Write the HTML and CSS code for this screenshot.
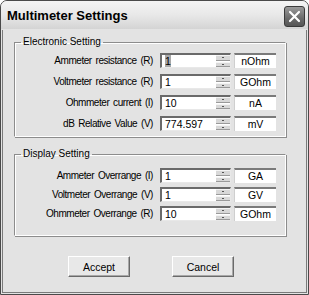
FILE: index.html
```html
<!DOCTYPE html>
<html lang="en">

<head>
    <meta charset="UTF-8">
    <title>Multimeter Settings</title>
    <link rel="stylesheet" href="styles.css">
</head>

<body>

    <div class="window">
        <div class="titlebar">
            <span class="title">Multimeter Settings</span>
            <div class="close">
                <svg width="13" height="13" viewBox="0 0 13 13">
                    <path d="M2 2 L11 11 M11 2 L2 11" stroke="#fff" stroke-width="2.2" stroke-linecap="round" />
                </svg>
            </div>
        </div>

        <div class="client">
            <fieldset class="group first">
                <legend>Electronic Setting</legend>
                <div class="row">
                    <span class="label">Ammeter resistance (R)</span>
                    <div class="field"><span class="text"><span class="sel">1</span></span><span class="spin"><i></i><i></i></span></div>
                    <span class="unit">nOhm</span>
                </div>
                <div class="row">
                    <span class="label">Voltmeter resistance (R)</span>
                    <div class="field"><span class="text">1</span><span class="spin"><i></i><i></i></span></div>
                    <span class="unit">GOhm</span>
                </div>
                <div class="row">
                    <span class="label">Ohmmeter current (I)</span>
                    <div class="field"><span class="text">10</span><span class="spin"><i></i><i></i></span></div>
                    <span class="unit">nA</span>
                </div>
                <div class="row">
                    <span class="label">dB Relative Value (V)</span>
                    <div class="field"><span class="text">774.597</span><span class="spin"><i></i><i></i></span></div>
                    <span class="unit">mV</span>
                </div>
            </fieldset>

            <fieldset class="group second">
                <legend>Display Setting</legend>
                <div class="row">
                    <span class="label">Ammeter Overrange (I)</span>
                    <div class="field"><span class="text">1</span><span class="spin"><i></i><i></i></span></div>
                    <span class="unit">GA</span>
                </div>
                <div class="row">
                    <span class="label">Voltmeter Overrange (V)</span>
                    <div class="field"><span class="text">1</span><span class="spin"><i></i><i></i></span></div>
                    <span class="unit">GV</span>
                </div>
                <div class="row">
                    <span class="label">Ohmmeter Overrange (R)</span>
                    <div class="field"><span class="text">10</span><span class="spin"><i></i><i></i></span></div>
                    <span class="unit">GOhm</span>
                </div>
            </fieldset>

            <div class="buttons">
                <button class="btn">Accept</button>
                <button class="btn">Cancel</button>
            </div>
        </div>
    </div>

</body>

</html>
```

FILE: styles.css
```css
body {
    margin: 0;
    padding: 0;
    font-family: "Liberation Sans", Arial, sans-serif;
    font-size: 10px;
    color: #000;
}

.window {
    width: 309px;
    height: 295px;
    box-sizing: border-box;
    border: 1px solid #4a4a4a;
    border-radius: 7px 7px 0 0;
    background-color: #e3e3e3;
    display: flex;
    flex-direction: column;
    overflow: hidden;
}

.titlebar {
    height: 28px;
    display: flex;
    align-items: center;
    justify-content: space-between;
    padding: 0 3px 0 6px;
    background: linear-gradient(#f4f4f4, #e8e8e8 50%, #d4d4d4);
}

.title {
    font-weight: bold;
    font-size: 13px;
    margin-top: 1px;
}

.close {
    width: 19px;
    height: 19px;
    display: flex;
    align-items: center;
    justify-content: center;
    border: 1px solid #3a3a3a;
    border-radius: 3px;
    background: linear-gradient(#9a9a9a, #6a6a6a 60%, #555);
    margin-top: 3px;
}

.client {
    flex: 1;
    margin: 1px;
    border: 1px solid #7a7a7a;
    border-top: none;
    padding-top: 6px;
}

.group {
    margin: 0 20px 0 11px;
    padding: 0;
    border: none;
    border-top: 1px solid #8c8c8c;
    border-left: 1px solid #8c8c8c;
    border-right: 1px solid #fff;
    border-bottom: 1px solid #fff;
    box-shadow: inset 1px 1px 0 #fff, 1px 1px 0 #8c8c8c;
    display: flex;
    flex-direction: column;
}

.group legend {
    margin-left: 6px;
    padding: 0 2px;
    line-height: 12px;
    font-size: 10px;
}

.first {
    gap: 6px;
    padding: 5px 0 5px 0;
}

.second {
    margin-top: 11px;
    gap: 4px;
    padding: 8px 0 14px 0;
}

.row {
    display: flex;
    align-items: center;
    height: 15px;
}

.label {
    width: 138px;
    text-align: right;
    font-size: 10px;
    letter-spacing: -0.45px;
    word-spacing: 1.5px;
    white-space: nowrap;
}

.field {
    margin-left: 7px;
    width: 71px;
    height: 15px;
    box-sizing: border-box;
    display: flex;
    align-items: center;
    background-color: #fff;
    border-top: 2px solid #6a6a6a;
    border-left: 2px solid #6a6a6a;
    border-right: 1px solid #e8e8e8;
    border-bottom: 1px solid #e8e8e8;
}

.text {
    flex: 1;
    padding-left: 3px;
    font-size: 10.5px;
    line-height: 12px;
}

.sel {
    background-color: #a8a8a8;
}

.spin {
    width: 14px;
    height: 12px;
    display: flex;
    flex-direction: column;
    gap: 1px;
}

.spin i {
    flex: 1;
    background-color: #d8d8d8;
    border-top: 1px solid #f4f4f4;
    border-bottom: 1px solid #9a9a9a;
    display: flex;
    align-items: center;
    justify-content: center;
}

.spin i::after {
    content: "";
    width: 2px;
    height: 1px;
    background-color: #555;
}

.unit {
    margin-left: 3px;
    width: 42px;
    height: 15px;
    box-sizing: border-box;
    background-color: #fff;
    border-top: 2px solid #7a7a7a;
    border-left: 1px solid #cfcfcf;
    text-align: center;
    font-size: 10.5px;
    line-height: 12px;
}

.buttons {
    display: flex;
    gap: 42px;
    padding-left: 65px;
    margin-top: 20px;
}

.btn {
    width: 62px;
    height: 21px;
    padding: 0;
    font-family: "Liberation Sans", Arial, sans-serif;
    font-size: 10.5px;
    background-color: #e8e8e8;
    border: 1px solid;
    border-color: #fff #6a6a6a #6a6a6a #fff;
    box-shadow: inset -1px -1px 0 #a8a8a8;
    color: #000;
}
```
